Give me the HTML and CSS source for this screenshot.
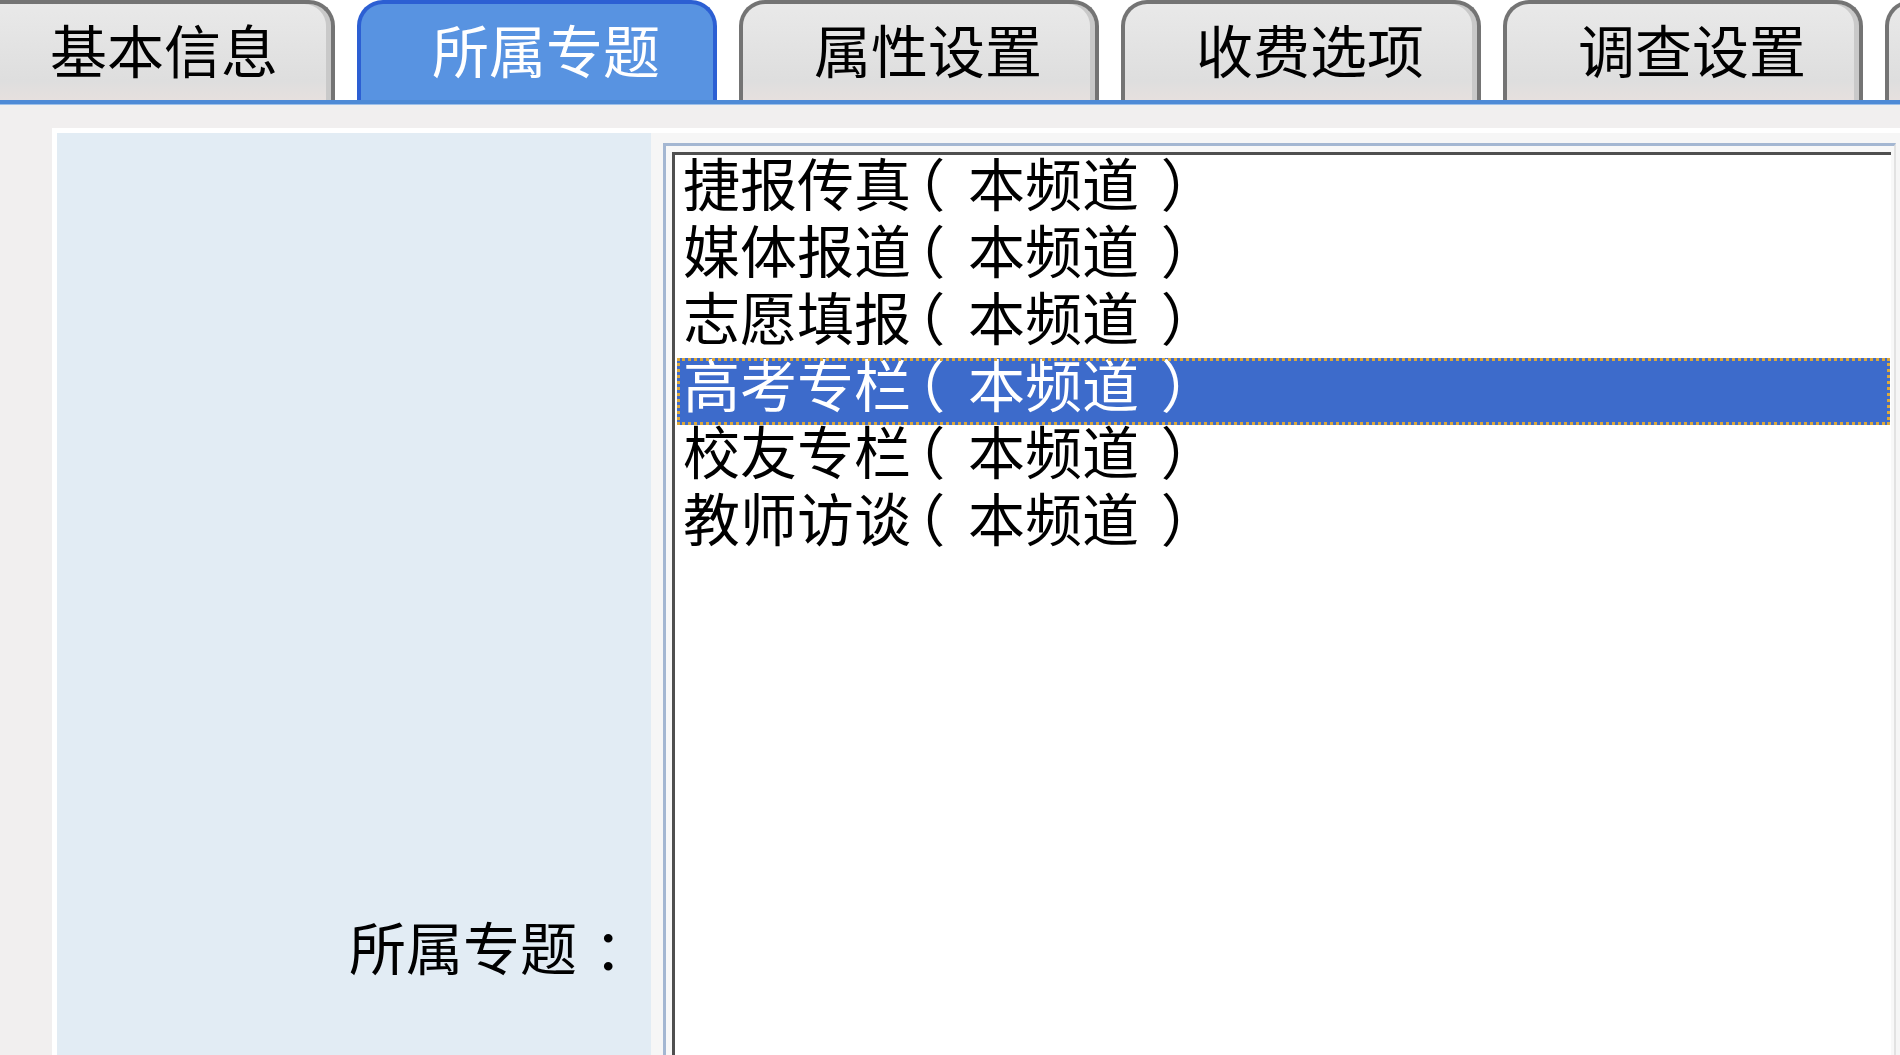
FILE: index.html
```html
<!DOCTYPE html>
<html lang="zh-CN">
<head>
<meta charset="UTF-8">
<meta name="viewport" content="width=device-width, initial-scale=1.0">
<title>所属专题</title>
<link rel="stylesheet" href="styles.css">
</head>
<body>
<div class="tabs">
    <div class="tab">基本信息</div>
    <div class="tab active">所属专题</div>
    <div class="tab">属性设置</div>
    <div class="tab">收费选项</div>
    <div class="tab">调查设置</div>
    <div class="tab"></div>
</div>

<div class="content">
    <div class="form-row">
        <div class="label-cell">所属专题<span class="colon">：</span></div>
        <div class="value-cell">
            <div class="list-frame">
                <div class="listbox">
                    <div class="option">捷报传真<span class="po">（</span>本频道<span class="pc">）</span></div>
                    <div class="option">媒体报道<span class="po">（</span>本频道<span class="pc">）</span></div>
                    <div class="option">志愿填报<span class="po">（</span>本频道<span class="pc">）</span></div>
                    <div class="option selected">高考专栏<span class="po">（</span>本频道<span class="pc">）</span></div>
                    <div class="option">校友专栏<span class="po">（</span>本频道<span class="pc">）</span></div>
                    <div class="option">教师访谈<span class="po">（</span>本频道<span class="pc">）</span></div>
                </div>
            </div>
        </div>
    </div>
</div>
</body>
</html>
```

FILE: styles.css
```css
html, body {
    margin: 0;
    padding: 0;
    overflow: hidden;
}
body {
    font-family: "Noto Sans CJK SC", sans-serif;
    font-size: 57px;
    color: #000;
    background-color: #f1efef;
}
.tabs {
    display: flex;
    gap: 22px;
    height: 100px;
    margin-left: -25px;
    background-color: #fff;
    border-bottom: 4px solid #4e8ad6;
    box-shadow: 0 1px 0 #9dbfe8;
}
.tab {
    flex: 0 0 360px;
    box-sizing: border-box;
    height: 100px;
    border: 4px solid #747474;
    border-bottom: none;
    border-radius: 26px 26px 0 0;
    background: linear-gradient(#e9e9e9, #dedede 80%, #e6e0de);
    box-shadow: inset -5px 0 0 #c9c9c9;
    display: flex;
    align-items: center;
    justify-content: center;
    padding: 0 0 8px 18px;
    line-height: 1;
    white-space: nowrap;
}
.tab.active {
    background: #5893e1;
    border-color: #2c5fd3;
    box-shadow: none;
    color: #fff;
}
.content {
    padding: 24px 0 0 52px;
}
.form-row {
    display: grid;
    grid-template-columns: 599px 1fr;
}
.label-cell {
    border-top: 5px solid #fff;
    border-left: 5px solid #fff;
    background-color: #e2ecf4;
    display: flex;
    align-items: center;
    justify-content: flex-end;
    white-space: nowrap;
}
.colon {
    padding-left: 0.3em;
}
.value-cell {
    border-top: 5px solid #fff;
    background-color: #f6f6f6;
    padding: 10px 4px 0 12px;
}
.list-frame {
    box-sizing: border-box;
    height: 1614px;
    border: 3px solid #a4b7d2;
    border-right: 2px solid #e2e2e2;
    border-bottom-color: #e2e2e2;
    padding: 6px 3px 0 6px;
    background-color: #f8f8f8;
}
.listbox {
    box-sizing: border-box;
    height: 100%;
    border-top: 3px solid #4f4f4f;
    border-left: 3px solid #4f4f4f;
    background-color: #fff;
    padding: 2px 1px 0 2px;
}
.option {
    box-sizing: border-box;
    height: 67px;
    line-height: 49px;
    padding: 0 0 18px 6px;
    white-space: nowrap;
}
.option .po {
    font-feature-settings: "halt";
    padding: 0 0.4em 0 0.1em;
}
.option .pc {
    padding-left: 0.38em;
}
.option.selected {
    background-color: #3d6bcb;
    color: #fff;
    outline: 3px dotted #dba83a;
    outline-offset: -3px;
}
```
